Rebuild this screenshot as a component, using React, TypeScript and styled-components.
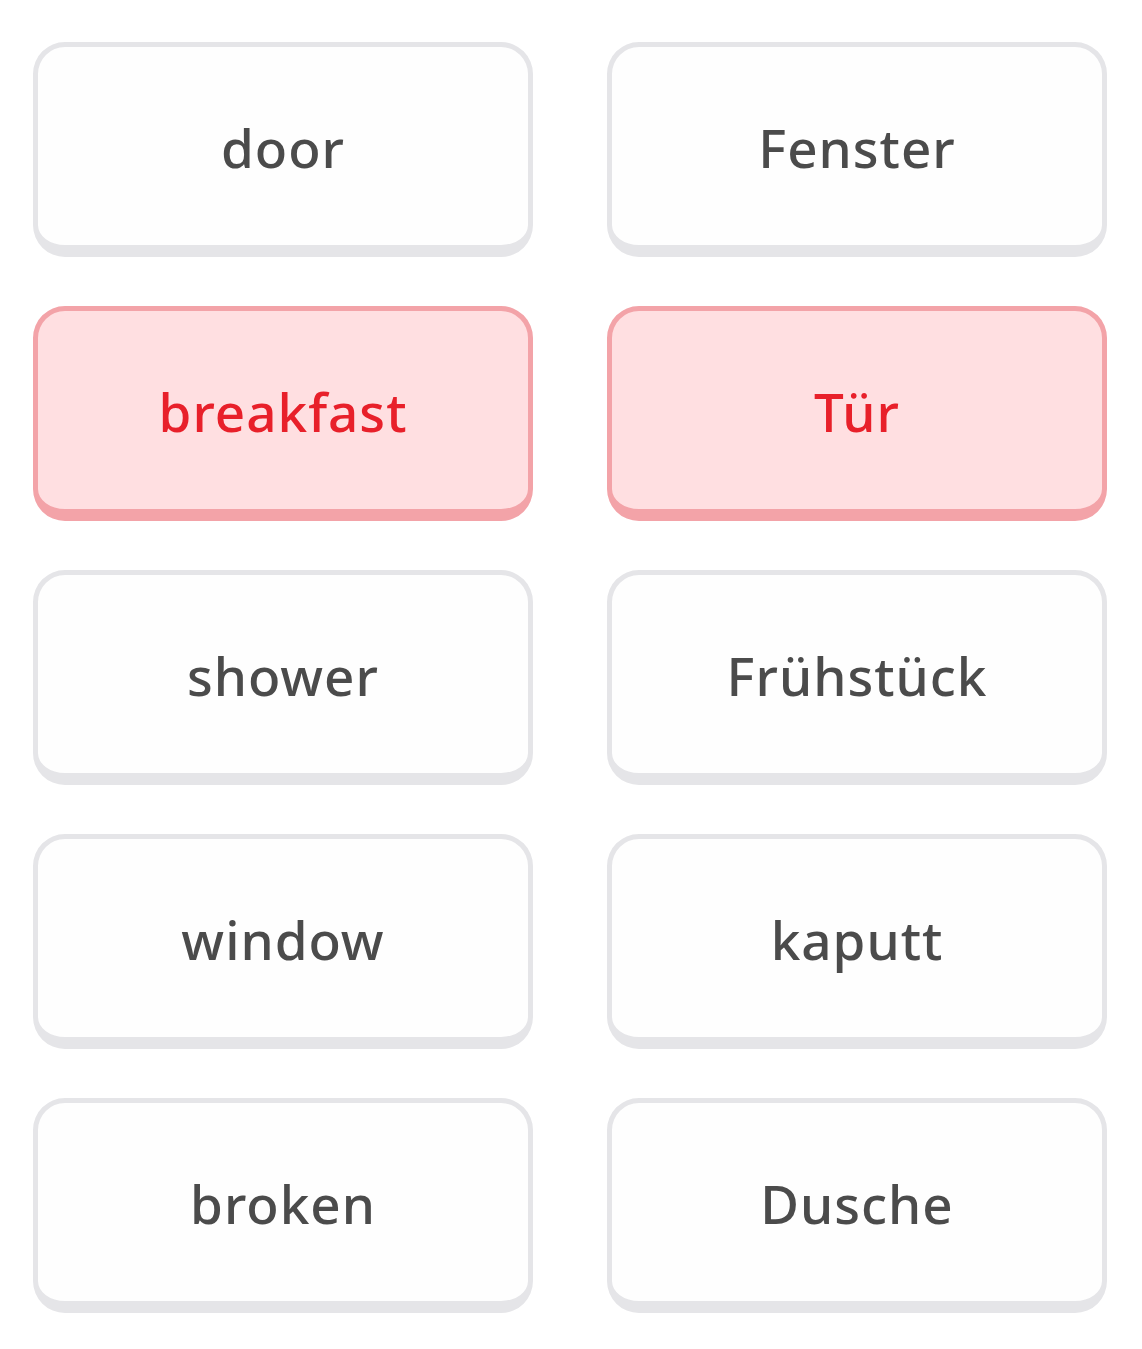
import React from "react";
import styled, { createGlobalStyle } from "styled-components";

const Global = createGlobalStyle`
  html, body { margin: 0; padding: 0; background: #ffffff; }
  body { font-family: "Noto Sans", "DejaVu Sans", sans-serif; }
`;

const Page = styled.div`
  width: 1142px;
  min-height: 1349px;
  box-sizing: border-box;
  padding: 42px 35px 0 33px;
  background: #ffffff;
`;

const Grid = styled.div`
  display: grid;
  grid-template-columns: 500px 500px;
  column-gap: 74px;
  row-gap: 49px;
`;

const Card = styled.button<{ $wrong?: boolean }>`
  height: 215px;
  box-sizing: border-box;
  display: flex;
  align-items: center;
  justify-content: center;
  padding: 2px 0 0;
  border-radius: 32px;
  border: 5px solid ${(p) => (p.$wrong ? "#f3a3a8" : "#e5e5e8")};
  border-bottom-width: 12px;
  background: ${(p) => (p.$wrong ? "#ffdfe1" : "#fefefe")};
  color: ${(p) => (p.$wrong ? "#e8202a" : "#4b4b4b")};
  font-family: "Noto Sans", "DejaVu Sans", sans-serif;
  font-size: 53px;
  font-weight: 500;
  letter-spacing: 1px;
  cursor: pointer;
`;

const items: { text: string; wrong?: boolean }[] = [
  { text: "door" },
  { text: "Fenster" },
  { text: "breakfast", wrong: true },
  { text: "Tür", wrong: true },
  { text: "shower" },
  { text: "Frühstück" },
  { text: "window" },
  { text: "kaputt" },
  { text: "broken" },
  { text: "Dusche" },
];

export default function App() {
  return (
    <>
      <Global />
      <Page>
        <Grid>
          {items.map((it) => (
            <Card key={it.text} $wrong={it.wrong}>
              {it.text}
            </Card>
          ))}
        </Grid>
      </Page>
    </>
  );
}
